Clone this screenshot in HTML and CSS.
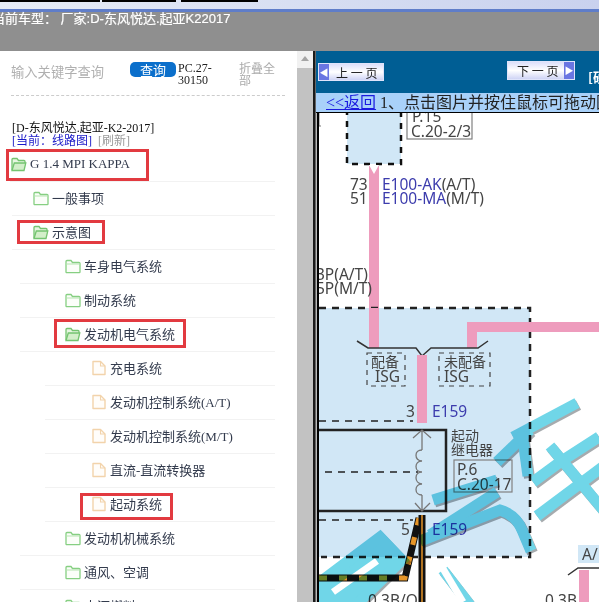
FILE: index.html
```html
<!DOCTYPE html>
<html lang="zh">
<head>
  <meta charset="UTF-8">
  <title>线路图</title>
  <link rel="stylesheet" href="styles.css">
</head>
<body>

<svg class="defs" width="0" height="0">
  <symbol id="folder" viewBox="0 0 16 16">
    <path d="M1 14V3.500C1 3 1.400 2.500 2 2.500h4l1.500 2H14c.6 0 1 .4 1 1V14c0 .4-.3.7-.7.7H1.700C1.300 14.700 1 14.400 1 14z" fill="#fbfef9" stroke="#86cf82" stroke-width="1.300"/>
    <path d="M1 6h14" stroke="#b5e3b0" stroke-width="1"/>
  </symbol>
  <symbol id="folder-open" viewBox="0 0 16 16">
    <path d="M1 14V3.500C1 3 1.400 2.500 2 2.500h4l1.500 2H13c.6 0 1 .4 1 1V7" fill="#e6f6e0" stroke="#74c470" stroke-width="1.300"/>
    <path d="M1 14.500L3.300 7h11.500L13 14.500z" fill="#d3efca" stroke="#74c470" stroke-width="1.300"/>
  </symbol>
  <symbol id="file" viewBox="0 0 16 16">
    <path d="M2 1.500h7.500L14 6v8.500H2z" fill="#fffdfa" stroke="#f2d3ab" stroke-width="1.400" stroke-linejoin="round"/>
    <path d="M9.500 1.500V6H14" fill="none" stroke="#f2d3ab" stroke-width="1.100"/>
  </symbol>
</svg>

<div class="topstrip">
  <span class="tab tab-a"></span>
  <span class="tab tab-b"></span>
  <span class="tab tab-c"></span>
</div>
<div class="carbar">当前车型： 厂家:D-东风悦达.起亚K22017</div>

<div class="main">
  <div class="sidebar">
    <div class="search">
      <span class="keyword">输入关键字查询</span>
      <a class="btn-query">查询</a>
      <span class="pc">PC.27-30150</span>
      <span class="fold">折叠全部</span>
    </div>
    <div class="vehicle">
      <div>[D-东风悦达.起亚-K2-2017]</div>
      <div><a class="current">[当前：线路图]</a> <a class="refresh">[刷新]</a></div>
    </div>
    <ul class="tree">
      <li class="row l0"><svg class="ico"><use href="#folder-open"/></svg>G 1.4 MPI KAPPA<i class="mark mark-root"></i></li>
      <li class="row l1"><svg class="ico"><use href="#folder"/></svg>一般事项</li>
      <li class="row l1"><svg class="ico"><use href="#folder-open"/></svg>示意图<i class="mark mark-schema"></i></li>
      <li class="row l2"><svg class="ico"><use href="#folder"/></svg>车身电气系统</li>
      <li class="row l2"><svg class="ico"><use href="#folder"/></svg>制动系统</li>
      <li class="row l2"><svg class="ico"><use href="#folder-open"/></svg>发动机电气系统<i class="mark mark-engine"></i></li>
      <li class="row l3"><svg class="ico"><use href="#file"/></svg>充电系统</li>
      <li class="row l3"><svg class="ico"><use href="#file"/></svg>发动机控制系统(A/T)</li>
      <li class="row l3"><svg class="ico"><use href="#file"/></svg>发动机控制系统(M/T)</li>
      <li class="row l3"><svg class="ico"><use href="#file"/></svg>直流-直流转换器</li>
      <li class="row l3"><svg class="ico"><use href="#file"/></svg>起动系统<i class="mark mark-start"></i></li>
      <li class="row l2"><svg class="ico"><use href="#folder"/></svg>发动机机械系统</li>
      <li class="row l2"><svg class="ico"><use href="#folder"/></svg>通风、空调</li>
      <li class="row l2"><svg class="ico"><use href="#folder"/></svg>大源燃料</li>
    </ul>
  </div>

  <div class="scrollbar">
    <div class="scroll-up"></div>
    <div class="scroll-thumb"></div>
  </div>
  <div class="divider"></div>

  <div class="viewer">
    <div class="pager">
      <a class="page-btn prev"><span class="arrow">&#9664;</span><span class="page-label">上 一 页</span></a>
      <a class="page-btn next"><span class="page-label">下 一 页</span><span class="arrow">&#9654;</span></a>
      <span class="pager-note">[硬</span>
    </div>
    <div class="infobar"><a class="back">&lt;&lt;返回</a> 1、点击图片并按住鼠标可拖动图片</div>
    <div class="diagram-wrap">
      <svg class="diagram" width="280" height="489" viewBox="319 113 280 489">
        <!-- upper module -->
        <rect x="347" y="105" width="54" height="59" class="blue-dash"/>
        <path d="M319 113v13h2" class="thin"/>
        <rect x="407" y="105" width="65" height="34" class="tag"/>
        <text x="412" y="122" class="t">P.15</text>
        <text x="411" y="137" class="t">C.20-2/3</text>
        <rect x="369" y="165" width="10" height="183" class="pink"/>
        <path d="M369 165l5 9 5-9" class="chevron"/>
        <text x="350" y="190" class="t">73</text>
        <text x="382" y="190" class="t"><tspan class="code">E100-AK</tspan>(A/T)</text>
        <text x="350" y="204" class="t">51</text>
        <text x="382" y="204" class="t"><tspan class="code">E100-MA</tspan>(M/T)</text>
        <text x="316" y="280" class="t">3P(A/T)</text>
        <text x="316" y="294" class="t">5P(M/T)</text>

        <!-- fuse box area -->
        <rect x="310" y="308" width="220" height="249" class="area"/>
        <path d="M319 308H530V557H321" class="heavy-dash"/>
        <rect x="369" y="308" width="10" height="40" class="pink"/>
        <path d="M599 327H472V348" class="pink-line"/>
        <path d="M357 341l11 7h48l6 8 9-8h47l10-7" class="thin dark"/>
        <rect x="417" y="355" width="10" height="68" class="pink"/>
        <rect x="367" y="353" width="38" height="33" class="sub-dash"/>
        <rect x="439" y="353" width="51" height="33" class="sub-dash"/>
        <text x="371" y="367" class="t small">配备</text>
        <text x="375" y="382" class="t">ISG</text>
        <text x="444" y="367" class="t small">未配备</text>
        <text x="444" y="382" class="t">ISG</text>
        <text x="406" y="417" class="t">3</text>
        <text x="432" y="417" class="t code">E159</text>
        <path d="M319 421H413" class="thin-dash"/>

        <!-- relay -->
        <path d="M319 430H446V511H319" class="relay"/>
        <path d="M325 472H418" class="thin-dash"/>
        <path d="M422 430V450M422 495V511M413 438l9-8 9 8M415 503l7 8 8-8" class="thin grey"/>
        <path d="M422 450c-8 0-8 10 0 11c-8 0-8 11 0 11c-8 0-8 11 0 12c-8 0-8 11 0 11" class="thin grey"/>
        <text x="451" y="441" class="t small">起动</text>
        <text x="451" y="455" class="t small">继电器</text>
        <rect x="454" y="460" width="58" height="32" class="tag"/>
        <text x="457" y="475" class="t">P.6</text>
        <text x="457" y="490" class="t">C.20-17</text>
        <path d="M319 520H413" class="thin-dash"/>
        <text x="401" y="535" class="t">5</text>
        <text x="432" y="535" class="t code">E159</text>

        <!-- striped wire -->
        <path d="M319 578H405L419 518" class="wire"/>
        <path d="M319 578H405L419 518" class="wire-stripe"/>
        <path d="M422 515V602" class="wire"/>
        <path d="M422 515V602" class="wire-core"/>
        <text x="368" y="606" class="t">0.3B/O</text>

        <!-- right hand connector -->
        <rect x="578" y="545" width="24" height="18" class="label-bg"/>
        <text x="582" y="560" class="t">A/</text>
        <path d="M568 575l10-7h22" class="thin dark"/>
        <rect x="579" y="570" width="10" height="32" class="pink"/>
        <text x="545" y="606" class="t">0.3B</text>

        <!-- watermark -->
        <g class="wm">
          <g class="wm-shadow" transform="translate(1.500 2)">
            <use href="#wm"/>
          </g>
          <g class="wm-fill">
            <g id="wm">
              <path d="M577 403L513 437"/>
              <path d="M530 430L497 462"/>
              <path d="M522 432L528 476"/>
              <path d="M599 437L560 462L533 482"/>
              <path d="M550 446L605 512"/>
              <path d="M605 465L537 516"/>
              <path d="M420 541L500 510Q516 515 522 530L531 551"/>
              <path d="M433 500L497 480"/>
              <path d="M497 492L430 535"/>
              <path class="wm-solid" d="M319 583L380 537L402 560L355 606H319Z"/>
              <path d="M443 570L470 605"/>
            </g>
          </g>
          <path d="M333 592L377 561" class="wm-gap"/>
          <path d="M442 567L463 602" class="wm-gap"/>
        </g>
      </svg>
    </div>
  </div>
</div>

</body>
</html>
```

FILE: styles.css
```css
* {
  box-sizing: border-box;
}

html, body {
  margin: 0;
  height: 602px;
  overflow: hidden;
}

body {
  font-family: "Noto Sans CJK SC", "Liberation Sans", sans-serif;
  background-color: #fff;
  color: #333;
}

.defs {
  position: absolute;
}

.topstrip {
  display: flex;
  height: 12px;
  background: linear-gradient(to right, #e6ecf6, #c9d1ee);
  border-bottom: 3px solid #5f7dc9;
}

.tab {
  height: 2px;
  background-color: #000;
}

.tab-a { width: 100px; }
.tab-b { width: 74px; margin-left: 2px; }
.tab-c { width: 77px; margin-left: 5px; }

.carbar {
  height: 39px;
  margin-left: -8px;
  background-color: #8f8f8f;
  color: #fff;
  font-family: "Liberation Sans", "Noto Sans CJK SC", sans-serif;
  font-size: 13px;
  line-height: 14px;
  white-space: pre;
  -webkit-text-stroke: 0.2px #fff;
}

.main {
  display: flex;
  height: 551px;
}

.sidebar {
  width: 297px;
  flex: none;
  font-family: "Liberation Serif", "Noto Sans CJK SC", serif;
}

.search {
  display: flex;
  align-items: flex-start;
  height: 45px;
  margin: 0 12px 0 11px;
  padding-top: 11px;
  border-bottom: 1px dashed #ccc;
  font-size: 12px;
  line-height: 12px;
}

.keyword {
  width: 119px;
  margin-top: 1px;
  font-family: "Noto Sans CJK SC", sans-serif;
  font-size: 13.300px;
  line-height: 18px;
  color: #b0b0b0;
}

.btn-query {
  width: 46px;
  height: 15px;
  margin-right: 2px;
  border-radius: 5px;
  background-color: #0b6fcb;
  color: #fff;
  font-family: "Noto Sans CJK SC", sans-serif;
  font-size: 13px;
  line-height: 15px;
  text-align: center;
}

.pc {
  width: 61px;
  padding-right: 18px;
  color: #222;
}

.fold {
  width: 38px;
  font-family: "Noto Sans CJK SC", sans-serif;
  color: #aaa;
}

.vehicle {
  margin: 26px 0 0 12px;
  font-size: 12px;
  line-height: 12.500px;
  color: #111;
}

.current {
  color: #1a1ac8;
}

.refresh {
  margin-left: 3px;
  color: #999;
}

.tree {
  list-style: none;
  margin: 1px 0 0;
  padding: 0;
}

.row {
  position: relative;
  display: flex;
  align-items: center;
  gap: 3px;
  height: 34px;
  margin-right: 22px;
  padding-bottom: 2px;
  border-bottom: 1px solid #f2f2f2;
  font-family: "Liberation Serif", "Noto Sans CJK SC", serif;
  font-size: 13px;
  color: #333b4d;
  white-space: nowrap;
}

.l0 { margin-left: 10px; padding-left: 1px; }
.l1 { margin-left: 12px; padding-left: 21px; }
.l2 { margin-left: 20px; padding-left: 45px; }
.l3 { margin-left: 45px; padding-left: 46px; }

.ico {
  width: 16px;
  height: 16px;
  flex: none;
}

/* red boxes drawn over the tree */
.mark {
  position: absolute;
  border: 3px solid #e23a40;
}

.mark-root { left: -4px; top: 1px; width: 143px; height: 32px; }
.mark-schema { left: 5px; top: 4px; width: 88px; height: 24px; }
.mark-engine { left: 34px; top: 1px; width: 132px; height: 29px; }
.mark-start { left: 35px; top: 5px; width: 93px; height: 27px; }

.scrollbar {
  width: 16px;
  flex: none;
  background-color: #c2c2c2;
}

.scroll-up {
  height: 17px;
  background-color: #f1f1f1;
  position: relative;
}

.scroll-up::after {
  content: "";
  position: absolute;
  left: 4px;
  top: 5px;
  border: 4px solid transparent;
  border-top: 0;
  border-bottom: 5px solid #a5a5a5;
}

.divider {
  width: 3px;
  flex: none;
  background: linear-gradient(to right, #1b1b1b 66%, #666 66%);
}

.viewer {
  flex: 1;
  min-width: 0;
  overflow: hidden;
  display: flex;
  flex-direction: column;
  background-color: #bbb;
}

.pager {
  display: flex;
  align-items: flex-start;
  height: 42px;
  padding-left: 2px;
  background-color: #005e94;
  white-space: nowrap;
}

.page-btn {
  display: flex;
  flex: none;
  align-items: center;
  height: 18px;
  border: 1px solid #dfe4fb;
  background: linear-gradient(to bottom, #dcdffa, #fff 50%, #cfd4f5);
  color: #222;
  font-family: "Noto Sans CJK SC", serif;
  font-size: 12px;
  white-space: pre;
}

.prev {
  width: 66px;
  margin-top: 12px;
}

.next {
  width: 68px;
  height: 19px;
  margin-top: 10px;
  margin-left: 123px;
  justify-content: space-between;
  padding-left: 9px;
}

.arrow {
  display: flex;
  align-items: center;
  justify-content: center;
  width: 10px;
  height: 100%;
  background-color: #6a76e2;
  color: #fff;
  font-size: 9px;
}

.prev .page-label {
  margin-left: 7px;
}

.pager-note {
  margin: 16px 0 0 13px;
  color: #fff;
  font-family: "Noto Sans CJK SC", sans-serif;
  font-size: 13px;
  font-weight: 700;
}

.infobar {
  height: 20px;
  padding-left: 10px;
  background-color: #a9d1f9;
  border-bottom: 1px solid #000;
  font-family: "Liberation Serif", "Noto Sans CJK SC", serif;
  font-size: 16px;
  line-height: 19px;
  white-space: nowrap;
  overflow: hidden;
  color: #222;
}

.back {
  color: #1a1ae0;
  text-decoration: underline;
}

.diagram-wrap {
  flex: 1;
  padding-left: 1px;
}

.diagram {
  display: block;
  width: 282px;
  border-left: 2px solid #000;
  background-color: #fff;
}

/* diagram parts */
.t {
  font-family: "Noto Sans", "Noto Sans CJK SC", sans-serif;
  font-size: 15.500px;
  fill: #444;
}

.small {
  font-size: 14px;
}

.code {
  fill: #3c3cad;
}

.blue-dash {
  fill: #d1e7f6;
  stroke: #111;
  stroke-width: 2.500;
  stroke-dasharray: 6 6;
}

.area,
.label-bg {
  fill: #d1e7f6;
}

.heavy-dash {
  fill: none;
  stroke: #222;
  stroke-width: 2.500;
  stroke-dasharray: 7 6;
}

.tag {
  fill: none;
  stroke: #808080;
  stroke-width: 1.200;
}

.pink {
  fill: #ee9cbd;
}

.pink-line {
  fill: none;
  stroke: #ee9cbd;
  stroke-width: 10;
}

.chevron {
  fill: #fff;
}

.thin {
  fill: none;
  stroke: #777;
  stroke-width: 1;
}

.dark {
  stroke: #333;
  stroke-width: 1.500;
}

.grey {
  stroke: #777;
  stroke-width: 1.300;
}

.sub-dash {
  fill: none;
  stroke: #444;
  stroke-width: 1.200;
  stroke-dasharray: 5 5;
}

.thin-dash {
  fill: none;
  stroke: #222;
  stroke-width: 1.300;
  stroke-dasharray: 7 6;
}

.relay {
  fill: none;
  stroke: #222;
  stroke-width: 2.500;
}

.wire {
  fill: none;
  stroke: #111;
  stroke-width: 7;
}

.wire-stripe {
  fill: none;
  stroke: #e69528;
  stroke-width: 5;
  stroke-dasharray: 8 12;
}

.wire-core {
  fill: none;
  stroke: #e69528;
  stroke-width: 1.500;
}

/* watermark multiplies over the drawing, so text stays readable */
.wm {
  mix-blend-mode: multiply;
}

.wm-shadow {
  fill: none;
  stroke: #a6abae;
  stroke-width: 11;
}

.wm-fill {
  fill: none;
  stroke: #70d6e8;
  stroke-width: 11;
}

.wm-solid {
  fill: currentColor;
  color: #70d6e8;
}

.wm-gap {
  fill: none;
  stroke: #fff;
  stroke-width: 7;
}
```
